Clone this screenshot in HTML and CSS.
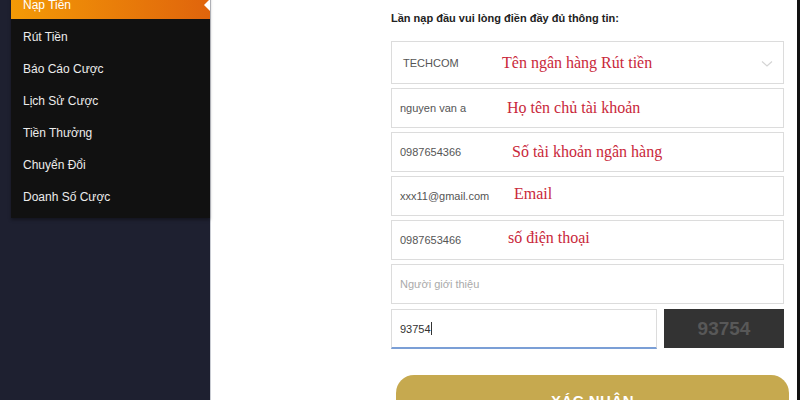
FILE: index.html
```html
<!DOCTYPE html>
<html lang="vi">
<head>
    <meta charset="UTF-8">
    <meta name="viewport" content="width=device-width, initial-scale=1.0">
    <title>Nạp Tiền</title>
    <link rel="stylesheet" href="styles.css">
</head>
<body>
    <div class="page">
        <aside class="sidebar">
            <ul class="menu">
                <li class="active">Nạp Tiền</li>
                <li>Rút Tiền</li>
                <li>Báo Cáo Cược</li>
                <li>Lịch Sử Cược</li>
                <li>Tiền Thưởng</li>
                <li>Chuyển Đổi</li>
                <li>Doanh Số Cược</li>
            </ul>
        </aside>
        <main class="content">
            <form class="deposit-form">
                <p class="form-title">Lần nạp đầu vui lòng điền đầy đủ thông tin:</p>
                <div class="field field-select">
                    <span class="value">TECHCOM</span>
                    <span class="note">Tên ngân hàng Rút tiền</span>
                    <svg class="arrow" width="12" height="8" viewBox="0 0 12 8"><path d="M1 1.5 L6 6 L11 1.5" fill="none" stroke="#d4d4d4" stroke-width="1.2"/></svg>
                </div>
                <div class="field">
                    <span class="value">nguyen van a</span>
                    <span class="note n2">Họ tên chủ tài khoản</span>
                </div>
                <div class="field">
                    <span class="value">0987654366</span>
                    <span class="note n3">Số tài khoản ngân hàng</span>
                </div>
                <div class="field">
                    <span class="value">xxx11@gmail.com</span>
                    <span class="note n4">Email</span>
                </div>
                <div class="field">
                    <span class="value">0987653466</span>
                    <span class="note n5">số điện thoại</span>
                </div>
                <div class="field">
                    <span class="placeholder">Người giới thiệu</span>
                </div>
                <div class="captcha-row">
                    <div class="field captcha-input">
                        <span class="value">93754</span><span class="caret"></span>
                    </div>
                    <div class="captcha-code">93754</div>
                </div>
                <button type="button" class="submit">XÁC NHẬN</button>
            </form>
        </main>
        <div class="edge"></div>
    </div>
</body>
</html>
```

FILE: styles.css
```css
*{
    margin: 0;
    padding: 0;
    box-sizing: border-box;
}
body{
    font-family: "Liberation Sans", Arial, sans-serif;
    height: 400px;
    overflow: hidden;
    background: #fff;
}
.page{
    display: flex;
    height: 400px;
}
.sidebar{
    width: 211px;
    background: #1e2030;
    border-right: 1px solid #c9ccd3;
    padding-left: 11px;
}
.menu{
    list-style: none;
    background: #111;
    margin-top: -13px;
    padding-bottom: 7px;
    box-shadow: 0 2px 3px rgba(0,0,0,.35);
}
.menu li{
    height: 32px;
    line-height: 28px;
    padding-top: 4px;
    padding-left: 12px;
    color: #ececec;
    font-size: 12px;
}
.menu li.active{
    position: relative;
    background: linear-gradient(to right, #f39a06, #e0640c);
    color: #fff;
}
.menu li.active::after{
    content: "";
    position: absolute;
    right: 0;
    top: 12px;
    border-top: 6px solid transparent;
    border-bottom: 6px solid transparent;
    border-right: 6px solid #fff;
}
.content{
    flex: 1;
    padding-left: 180px;
}
.deposit-form{
    width: 393px;
}
.form-title{
    font-size: 11px;
    font-weight: bold;
    color: #222;
    margin-top: 12px;
    height: 29px;
}
.field{
    display: flex;
    align-items: center;
    height: 40px;
    border: 1px solid #dcdcdc;
    padding-left: 8px;
    margin-bottom: 4px;
    font-size: 11px;
    color: #555;
}
.field-select{
    height: 43px;
    position: relative;
    padding-left: 11px;
}
.field .value{
    width: 102px;
    flex-shrink: 0;
}
.field-select .value{
    width: 99px;
}
.note{
    font-family: "Liberation Serif", "Times New Roman", serif;
    font-size: 16px;
    color: #c9283a;
}
.n2{ margin-left: 5px; }
.n3{ margin-left: 10px; }
.n4{ margin-left: 12px; margin-top: -5px; }
.n5{ margin-left: 6px; margin-top: -5px; }
.arrow{
    position: absolute;
    right: 10px;
    top: 18px;
}
.placeholder{
    color: #aaa;
    font-size: 11px;
}
.captcha-row{
    display: flex;
    gap: 7px;
    margin-top: 5px;
}
.captcha-input{
    width: 266px;
    margin-bottom: 0;
    border-bottom: 2px solid #7b9fd6;
    color: #333;
}
.captcha-input .value{
    width: auto;
}
.caret{
    width: 1px;
    height: 13px;
    background: #333;
}
.captcha-code{
    flex: 1;
    height: 39px;
    background: #333;
    color: #585858;
    font-size: 19px;
    font-weight: bold;
    display: flex;
    align-items: center;
    justify-content: center;
}
.submit{
    display: block;
    width: 393px;
    height: 50px;
    margin: 26px 0 0 5px;
    border: none;
    border-radius: 18px;
    background: #c6a94f;
    color: #fff;
    font-family: "Liberation Sans", Arial, sans-serif;
    font-size: 15px;
    font-weight: bold;
    letter-spacing: .5px;
}
.edge{
    width: 3px;
    background: #111;
}
```
